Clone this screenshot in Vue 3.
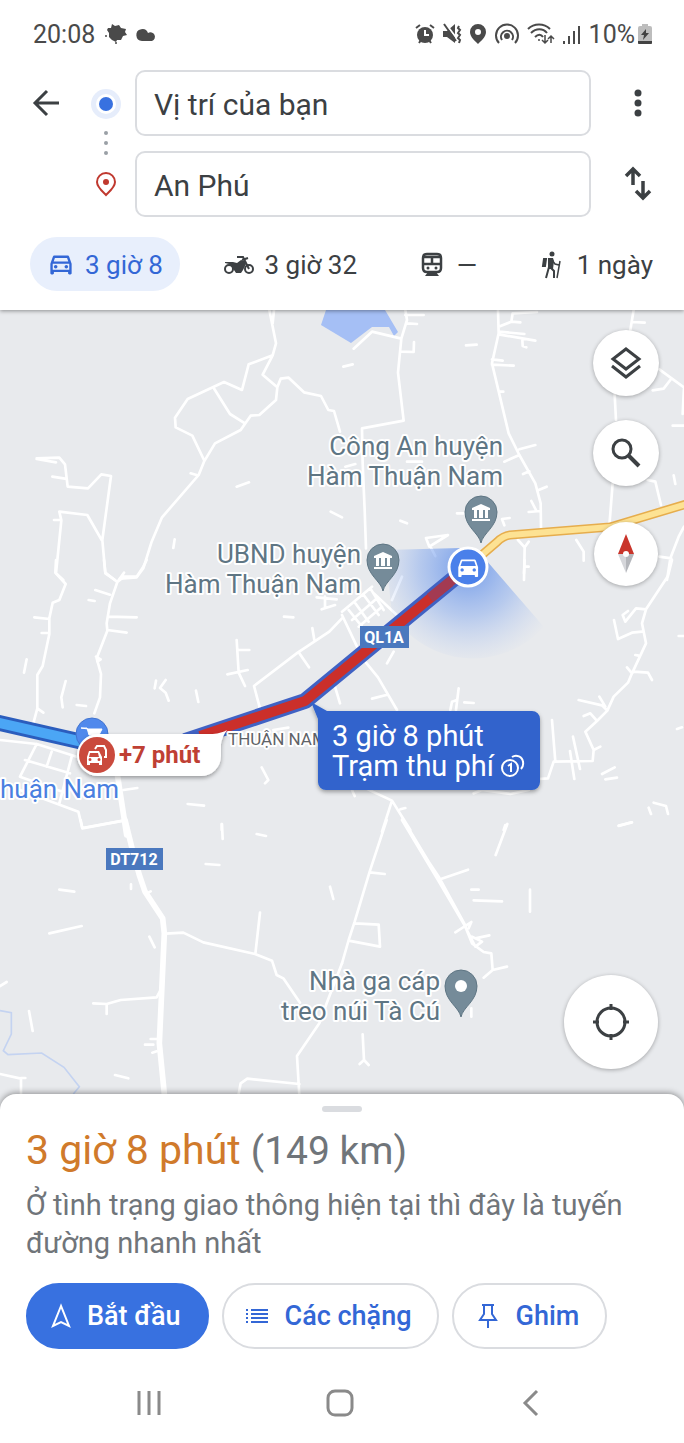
<template>
  <main class="app">
    <header class="header">
      <div class="status">
        <div class="status-side">
          <span>20:08</span>
          <svg width="24" height="24" viewBox="0 0 24 24" fill="currentColor">
            <path d="M5 6l3 0 1-4 3 2 4-1 2 3 5 1-1 3 2 3-4 1-2 4-4 0-1 2-4-2-3-3 0-4-2-3z" />
            <circle cx="3" cy="14" r="1" />
            <circle cx="13" cy="21" r="1" />
          </svg>
          <svg width="22" height="24" viewBox="0 0 22 24" fill="currentColor">
            <path d="M7 19a6 6 0 1 1 6-8A4.500 4.500 0 1 1 17 19z" />
          </svg>
        </div>
        <div class="status-side status-right">
          <svg width="20" height="22" viewBox="0 0 20 22" fill="none" stroke="currentColor" stroke-width="2">
            <circle cx="10" cy="12" r="8" fill="currentColor" stroke="none" />
            <path d="M1 5l4-3M19 5l-4-3M4 20l2-3M16 20l-2-3" />
            <path d="M10 7v5h4" stroke="#fff" />
          </svg>
          <svg width="20" height="22" viewBox="0 0 20 22" fill="none" stroke="currentColor" stroke-width="2">
            <path d="M1 8h4l8-7v19l-8-6H1z" fill="currentColor" stroke="none" />
            <path d="M3 0l13 17" stroke="#fff" />
            <path d="M2 1l12 17M17 3l-1 2 2 2-2 3 2 2-2 3 2 2-1 3" />
          </svg>
          <svg width="18" height="22" viewBox="0 0 18 22" fill="currentColor">
            <path fill-rule="evenodd" d="M9 1a8 8 0 0 1 8 8c0 5-5 9-8 12-3-3-8-7-8-12a8 8 0 0 1 8-8zm0 5a3 3 0 1 0 0 6 3 3 0 0 0 0-6z" />
          </svg>
          <svg width="26" height="22" viewBox="0 0 26 22" fill="none" stroke="currentColor" stroke-width="2">
            <circle cx="13" cy="13" r="2" fill="currentColor" />
            <path d="M8 17a6 6 0 1 1 10 0M5 20a11 11 0 1 1 16 0" />
          </svg>
          <svg width="28" height="22" viewBox="0 0 28 22" fill="none" stroke="currentColor" stroke-width="2">
            <path d="M1 6c6-6 16-6 22 0M4 10c5-5 12-5 16 0M8 14c3-3 6-3 8 0" />
            <circle cx="12" cy="17" r="1" fill="currentColor" stroke="none" />
            <path d="M18 12v8m-3-3l3 3 3-3M24 20v-7m-3 3l3-3 3 3" stroke-width="1.500" />
          </svg>
          <svg width="20" height="22" viewBox="0 0 20 22" fill="none" stroke="currentColor" stroke-width="2">
            <path d="M2 21v-3M7 21v-8M12 21V8M17 21V3" />
          </svg>
          <span>10%</span>
          <svg class="battery" width="14" height="22" viewBox="0 0 14 22">
            <path d="M4 1h6v2h2a2 2 0 0 1 2 2v15a1 1 0 0 1-1 1H1a1 1 0 0 1-1-1V5a2 2 0 0 1 2-2h2z" fill="#bdbdbd" />
            <path d="M0 18h14v2a1 1 0 0 1-1 1H1a1 1 0 0 1-1-1zM8 6l-5 6h3l-1 5 6-7H8z" fill="#424242" />
          </svg>
        </div>
      </div>

      <div class="search">
        <button class="icon-btn back" aria-label="Quay lại">
          <svg width="32" height="32" viewBox="0 0 32 32" fill="none" stroke="currentColor" stroke-width="3">
            <path d="M29 16H5M17 4L5 16l12 12" />
          </svg>
        </button>
        <svg class="trail" width="44" height="147" viewBox="0 0 44 147">
          <circle cx="22" cy="34" r="15" fill="#e6edfb" />
          <circle cx="22" cy="34" r="10" fill="#fff" />
          <circle cx="22" cy="34" r="7" fill="#3871e0" />
          <g fill="#9aa0a6">
            <circle cx="22" cy="63" r="2" />
            <circle cx="22" cy="73" r="2" />
            <circle cx="22" cy="83" r="2" />
          </g>
          <path d="M22 125c-4-4-9-8-9-13a9 9 0 0 1 18 0c0 5-5 9-9 13z" fill="none" stroke="#c0392f" stroke-width="2" />
          <circle cx="22" cy="112" r="3" fill="#c0392f" />
        </svg>
        <input class="place" v-model="origin" type="text" aria-label="Điểm đi" />
        <button class="icon-btn" aria-label="Tùy chọn khác">
          <svg width="32" height="32" viewBox="0 0 32 32" fill="currentColor">
            <circle cx="16" cy="6" r="3.500" />
            <circle cx="16" cy="16" r="3.500" />
            <circle cx="16" cy="26" r="3.500" />
          </svg>
        </button>
        <input class="place" v-model="destination" type="text" aria-label="Điểm đến" />
        <button class="icon-btn" aria-label="Đảo chiều" @click="swap">
          <svg width="32" height="36" viewBox="0 0 32 36" fill="none" stroke="currentColor" stroke-width="3.500">
            <path d="M11 19V3M4 10l7-7 7 7M21 15v17M14 25l7 7 7-7" />
          </svg>
        </button>
      </div>

      <nav class="modes" aria-label="Phương tiện">
        <button
          v-for="mode in modes"
          :key="mode.id"
          class="mode"
          :class="{ active: mode.id === selectedMode }"
          :aria-label="mode.name + ' ' + mode.time"
          @click="selectedMode = mode.id"
        >
          <svg v-if="mode.id === 'car'" width="26" height="26" viewBox="1 2 22 22" fill="currentColor">
            <path :d="carOutline" />
            <circle cx="7.500" cy="14.500" r="1.500" />
            <circle cx="16.500" cy="14.500" r="1.500" />
          </svg>
          <svg v-else-if="mode.id === 'bike'" width="30" height="26" viewBox="0 0 30 26" fill="none" stroke="currentColor" stroke-width="2">
            <circle cx="5" cy="17" r="4" />
            <circle cx="25" cy="17" r="4" />
            <path d="M1 10l8 0 4 1 4-3 4 1 1 3-3 6-2 3h-5l-4-6-3-3-4-1z" fill="currentColor" stroke="none" />
            <path d="M13 5h6l6 12M18 8l6-2" />
          </svg>
          <svg v-else-if="mode.id === 'train'" width="28" height="26" viewBox="-4 0 28 26" fill="none" stroke="currentColor" stroke-width="2.500">
            <path d="M5 2h10c3 0 4 1 4 4v10c0 3-2 4-4 4H5c-2 0-4-1-4-4V6c0-3 1-4 4-4zM1 5h18M1 12h18M10 5v7" />
            <path d="M6 20l-3 4h14l-3-4z" fill="currentColor" stroke="none" />
            <circle cx="6" cy="16" r="1.500" fill="currentColor" stroke="none" />
            <circle cx="14" cy="16" r="1.500" fill="currentColor" stroke="none" />
          </svg>
          <svg v-else width="28" height="28" viewBox="-4 0 28 28" fill="none" stroke="currentColor" stroke-width="2">
            <circle cx="10" cy="3" r="2.500" fill="currentColor" stroke="none" />
            <path d="M6 7h5l1 3-1 8H6z" fill="currentColor" stroke="none" />
            <path d="M2 8h2l-1 7H1zM7 16l-3 11M9 17l3 3v7" />
            <path d="M10 9l3 4 4 1M18 10l-3 17" stroke-width="1.500" />
          </svg>
          <span>{{ mode.time }}</span>
        </button>
      </nav>
    </header>

    <section class="map" aria-label="Bản đồ">
      <svg class="canvas" viewBox="0 310 684 800" preserveAspectRatio="xMidYMid slice">
        <defs>
          <radialGradient id="beam" gradientUnits="userSpaceOnUse" cx="468" cy="567" r="98">
            <stop offset="0" stop-color="#4a80e8" stop-opacity="0.750" />
            <stop offset="0.500" stop-color="#7aa2ee" stop-opacity="0.450" />
            <stop offset="1" stop-color="#a9c2f2" stop-opacity="0" />
          </radialGradient>
          <filter id="drop" x="-20%" y="-20%" width="140%" height="150%">
            <feDropShadow dx="0" dy="2" stdDeviation="2" flood-opacity="0.350" />
          </filter>
        </defs>

        <path class="lake" d="M326 310L321 325 351 343 372 327 389 327 394 336 398 332 385 310z" />

        <g v-for="tile in tiles" :key="tile.x + '-' + tile.y" :transform="`translate(${tile.x} ${tile.y}) scale(0.33333)`">
          <path class="river" v-if="tile.river" :d="tile.river" />
          <path class="road" :d="tile.roads" />
          <path class="road wide" v-if="tile.wide" :d="tile.wide" />
        </g>

        <path d="M468 567L486 560 544 627A96 96 0 0 1 392 614L385 550 460 548z" fill="url(#beam)" />

        <path class="line" d="M476 560L497 542Q503 536 510 535L610 527 690 503" stroke="#e6ad4d" stroke-width="9" />
        <path class="line" d="M476 560L497 542Q503 536 510 535L610 527 690 503" stroke="#fde293" stroke-width="6" />

        <path class="line" d="M-5 722L96 745" stroke="#2b5dbd" stroke-width="16" />
        <path class="line" d="M-5 722L96 745" stroke="#4ba6f5" stroke-width="10" />
        <path class="line" d="M185 741L305 701 468 567" stroke="#4062c4" stroke-width="16" />
        <path class="line" d="M200 736L305 701 450 582" stroke="#cb2f2a" stroke-width="10" />
        <path class="line" d="M430 598L462 572" stroke="#a33a52" stroke-width="10" />

        <!-- points of interest -->
        <g v-for="poi in pois" :key="poi.x">
          <g :transform="`translate(${poi.x} ${poi.y})`">
            <path d="M0 31C-2 21-16 15-16 0a16 16 0 0 1 32 0C16 15 2 21 0 31z" fill="#758b99" stroke="#5f7684" />
            <path v-if="poi.building" d="M-9-4L0-8 9-4v2H-9zM-7-2h3v8h-3zM-2-2h4v8h-4zM4-2h3v8H4zM-9 7H9v2H-9z" fill="#fff" />
            <circle v-else r="6" fill="#fff" />
          </g>
          <text class="label" :x="poi.tx" :y="poi.ty" text-anchor="end">{{ poi.lines[0] }}</text>
          <text class="label" :x="poi.tx" :y="poi.ty + 30" text-anchor="end">{{ poi.lines[1] }}</text>
        </g>
        <text class="label shop" x="0" y="798">huận Nam</text>
        <text class="label town" x="228" y="745">THUẬN NAM</text>

        <g class="shield">
          <rect x="360" y="626" width="49" height="22" />
          <text x="384" y="643">QL1A</text>
          <rect x="106" y="848" width="57" height="22" />
          <text x="134" y="865">DT712</text>
        </g>

        <circle cx="92" cy="734" r="16" fill="#5089ec" stroke="#4274cf" />
        <path d="M81 728h6l2 7h10l3-6H88z" fill="#fff" stroke="#fff" />

        <g filter="url(#drop)">
          <path d="M98 734H213Q222 733 227 730Q222 737 221 744V756A20 20 0 0 1 201 776H98A21 21 0 0 1 98 734z" fill="#fff" />
        </g>
        <circle cx="97" cy="755" r="18" fill="#ca4a3d" />
        <g transform="translate(86 746)">
          <path d="M9 3L11 0h7l2 4v7h-2" fill="none" stroke="#fff" stroke-width="2" />
          <path fill-rule="evenodd" d="M3 5h10l3 6v8h-3v-2H4v2H1v-8zM4 7l-1 4h10l-1-4zM4 12a1.500 1.500 0 1 0 0 3 1.500 1.500 0 0 0 0-3zM13 12a1.500 1.500 0 1 0 0 3 1.500 1.500 0 0 0 0-3z" fill="#fff" />
        </g>
        <text class="delay" x="119" y="763">+7 phút</text>

        <circle cx="468" cy="567" r="19" fill="#4a80ea" stroke="#fff" stroke-width="3" />
        <path :d="carSolid" fill="#fff" transform="translate(455 554) scale(1.100)" />

        <g filter="url(#drop)">
          <path d="M311 702L327 711H532a8 8 0 0 1 8 8v63a8 8 0 0 1-8 8H326a8 8 0 0 1-8-8V719z" fill="#3064cc" />
        </g>
        <text class="callout" x="332" y="746">3 giờ 8 phút</text>
        <text class="callout" x="332" y="776">Trạm thu phí</text>
        <g fill="none" stroke="#fff" stroke-width="2">
          <circle cx="510" cy="768" r="8" />
          <path d="M512 757A7 7 0 0 1 523 762A8 8 0 0 1 521 769M508 766l3-2v8" />
        </g>
      </svg>

      <div class="controls">
        <button class="fab" aria-label="Lớp bản đồ">
          <svg width="36" height="36" viewBox="0 0 36 36" fill="none" stroke="currentColor" stroke-width="3">
            <path d="M18 4L31 14 18 24 5 14zM4 21l14 11 14-11" />
          </svg>
        </button>
        <button class="fab" aria-label="Tìm kiếm">
          <svg width="36" height="36" viewBox="0 0 36 36" fill="none" stroke="currentColor" stroke-width="3">
            <circle cx="14" cy="14" r="9" />
            <path d="M21 21l10 10" stroke-width="4" />
          </svg>
        </button>
        <button class="fab compass" aria-label="La bàn">
          <svg width="20" height="40" viewBox="0 0 20 40">
            <path d="M10 0l8 20H2z" fill="#c9352b" />
            <path d="M2 20h8v19z" fill="#d5d6da" />
            <path d="M18 20h-8v19z" fill="#b4b6bb" />
            <circle cx="10" cy="20" r="3" fill="#fff" />
          </svg>
        </button>
      </div>
      <button class="fab locate" aria-label="Vị trí của tôi">
        <svg width="38" height="38" viewBox="0 0 38 38" fill="none" stroke="currentColor" stroke-width="3">
          <circle cx="19" cy="19" r="14" />
          <path d="M19 1v6M19 31v6M1 19h6M31 19h6" />
        </svg>
      </button>
    </section>

    <section class="sheet">
      <div class="handle"></div>
      <h1 class="summary">3 giờ 8 phút <span>(149 km)</span></h1>
      <p class="note">Ở tình trạng giao thông hiện tại thì đây là tuyến đường nhanh nhất</p>
      <div class="actions">
        <button class="action primary">
          <svg width="22" height="26" viewBox="1 0 22 26" fill="none" stroke="currentColor" stroke-width="2">
            <path d="M12 3L4 23l8-4 8 4z" />
          </svg>
          Bắt đầu
        </button>
        <button class="action">
          <svg width="24" height="26" viewBox="0 0 24 26" fill="none" stroke="currentColor" stroke-width="2">
            <path d="M0 7h2M0 11h2M0 15h2M0 19h2M5 7h17M5 11h17M5 15h17M5 19h17" />
          </svg>
          Các chặng
        </button>
        <button class="action">
          <svg width="24" height="26" viewBox="-2 0 24 26" fill="none" stroke="currentColor" stroke-width="2">
            <path d="M4 2h12M6 2v9l-4 6h16l-4-6V2M10 17v8" />
          </svg>
          Ghim
        </button>
      </div>
    </section>

    <nav class="system-nav" aria-label="Điều hướng">
      <button aria-label="Gần đây">
        <svg width="28" height="28" viewBox="0 0 28 28" fill="none" stroke="currentColor" stroke-width="3">
          <path d="M4 2v24M14 2v24M24 2v24" />
        </svg>
      </button>
      <button aria-label="Trang chủ">
        <svg width="28" height="28" viewBox="0 0 28 28" fill="none" stroke="currentColor" stroke-width="3">
          <rect x="2" y="2" width="24" height="24" rx="7" />
        </svg>
      </button>
      <button aria-label="Trở lại">
        <svg width="28" height="28" viewBox="0 0 28 28" fill="none" stroke="currentColor" stroke-width="3">
          <path d="M20 2L8 14l12 12" />
        </svg>
      </button>
    </nav>
  </main>
</template>

<script setup>
import { ref } from 'vue'

const origin = ref('Vị trí của bạn')
const destination = ref('An Phú')
const selectedMode = ref('car')

const swap = () => {
  const previous = origin.value
  origin.value = destination.value
  destination.value = previous
}

const modes = [
  { id: 'car', name: 'Ô tô', time: '3 giờ 8' },
  { id: 'bike', name: 'Xe máy', time: '3 giờ 32' },
  { id: 'train', name: 'Tàu', time: '—' },
  { id: 'walk', name: 'Đi bộ', time: '1 ngày' },
]

const carBody =
  'M18.92 6.01C18.72 5.42 18.16 5 17.5 5h-11c-.66 0-1.21.42-1.42 1.01L3 12v8c0 .55.45 1 1 1h1c.55 0 1-.45 1-1v-1h12v1c0 .55.45 1 1 1h1c.55 0 1-.45 1-1v-8l-2.08-5.99z'
const carOutline = carBody + 'M6.85 7h10.29l1.04 3H5.81l1.04-3zM19 17H5v-5h14v5z'
const carSolid =
  carBody +
  'M6.5 16c-.83 0-1.5-.67-1.5-1.5S5.67 13 6.5 13s1.5.67 1.5 1.5S7.33 16 6.5 16zm11 0c-.83 0-1.5-.67-1.5-1.5s.67-1.5 1.5-1.5 1.5.67 1.5 1.5-.67 1.5-1.5 1.5zM5 11l1.5-4.5h11L19 11H5z'

const pois = [
  { x: 481, y: 512, tx: 503, ty: 455, building: true, lines: ['Công An huyện', 'Hàm Thuận Nam'] },
  { x: 383, y: 560, tx: 361, ty: 563, building: true, lines: ['UBND huyện', 'Hàm Thuận Nam'] },
  { x: 461, y: 986, tx: 440, ty: 990, building: false, lines: ['Nhà ga cáp', 'treo núi Tà Cú'] },
]

// road geometry, three units per map pixel inside each tile
const tiles = [
  {
    x: 0,
    y: 310,
    roads:
      'M808 0L828 100 818 136 788 194 832 232 828 270 778 315 752 317 722 360 645 400 612 455 596 495 486 622 455 695 430 775 410 802 360 806' +
      'M822 0L818 40M832 232L842 206 866 203 912 247 963 258 985 300 1002 303 1020 365' +
      'M818 136L746 163 726 240 672 216 563 267 525 323 527 352 577 377 612 450M643 237L690 312 735 340M572 490L592 496' +
      'M110 445L178 443 195 463 203 530 264 535 304 493 333 498 307 690 316 790 345 810M110 447L168 457M157 500L195 506' +
      'M162 630H184M190 810L168 790 184 631 178 605 262 615 305 690M710 530L747 517M992 605L1026 622M524 688L520 714',
  },
  {
    x: 342,
    y: 310,
    roads:
      'M35 116L90 65 178 86M190 0L195 30 178 86 168 188 185 332 60 355 62 460 68 600 72 715M190 15H245M195 40L225 42M178 125L215 126 216 96' +
      'M372 106L404 104M4 170L32 163M468 0L470 70 450 160 500 370 532 435 580 520 596 580 597 655' +
      'M470 50L508 35 512 10 585 6M508 35L535 37M470 65L547 72M470 73L580 92M541 88L542 108 553 112M450 148L482 152M450 164L515 167M470 245H484' +
      'M532 418L580 405M532 435L487 455M543 492L562 484M590 540L614 530M560 606L595 603M568 573L582 600M503 624L480 627 487 646' +
      'M875 0L865 60M870 36L908 38M818 255L822 330M812 520L803 635M917 510L940 515 957 585M952 178L1026 232 1022 312M985 210L965 236 932 241' +
      'M992 347H1026M995 496L1000 522M1026 650L1010 680 985 745 975 810M952 740L988 745M703 690L725 725 725 752M528 690L548 712 546 810M548 712L560 695' +
      'M345 610H365M175 632L195 640M252 684L318 675 262 710zM268 715L280 738M10 470L40 462M195 455H240',
  },
  {
    x: 0,
    y: 560,
    roads:
      'M168 0L166 38 197 72 178 120 158 128 148 175 148 222 128 318 112 345 112 445 100 490' +
      'M312 0L316 38 352 66 330 130 320 190 322 212 290 295 303 342 300 412 283 460M372 38L352 66 372 50 410 50 430 20 440 0' +
      'M286 90L330 104M266 120L284 123M103 172L148 177M125 219H148M325 170L410 172M322 210L380 218M80 298L72 338M197 363L184 412 188 442' +
      'M112 445L130 458M230 435L258 438M288 290L302 298 292 305M468 362L464 385M497 360L480 384 497 398 506 422M588 392L595 426' +
      'M710 240L716 338 735 378M716 270H748M682 343L743 330M852 170L880 172M937 204L943 240M1026 175L988 215 893 278 762 378 780 445M897 278L927 322M1005 380L1020 430' +
      'M950 112L1010 118M965 148L1005 135M975 110V140M0 540L110 552 230 590M110 552L60 650M75 600L210 640M155 575L140 620M60 650L200 700M215 590L178 730' +
      'M60 690L235 755 247 805 370 782M370 690L412 684M785 622L805 660 795 670M563 732L612 737M665 792V810M820 510L865 503',
    wide: 'M350 630L380 825',
  },
  {
    x: 342,
    y: 560,
    roads:
      'M546 40L548 0M548 20H560M990 0L978 48 912 148 900 190 912 250 870 340 858 368 815 410 796 452 765 483 730 515 755 570 752 603 635 605 618 655 590 657' +
      'M912 148L882 145 850 185 842 165 858 153M900 215L870 218 828 237 816 180M880 285L890 287M855 322L870 340 875 335 918 338 930 360' +
      'M1010 228H1026M710 420L780 436 796 452M772 410L790 440M725 468L745 460 765 483M755 570L775 560M630 480L640 605M693 530L714 627M684 573L697 657' +
      'M780 642L818 622M790 658L825 653M1005 507L1020 502M920 743L927 762M935 728L972 738 978 762M830 798L868 787' +
      'M350 385L342 450M325 450L330 425 345 420M367 427L395 429M72 308L108 352 165 450M90 416L133 405M395 700L420 690 505 702 560 690' +
      'M60 680L150 722 205 810M150 722L120 815M175 748L190 744M30 690L38 708M490 795L485 810' +
      'M0 155L90 80M0 165L45 260M20 150L60 200M40 130L80 185M65 105L110 165M85 85L125 150M30 180L105 115M50 200L120 140M95 100L170 170M150 120L180 50M135 310L155 275',
  },
  {
    x: 0,
    y: 820,
    river: 'M0 572L34 578V642L10 692 24 704 125 699 192 742 238 800 220 822',
    roads:
      'M242 0L247 24 370 2M666 12L668 57M770 42L798 48M617 132L658 135M178 209L223 215M393 193V207M440 220L452 214M148 340L245 318M448 350L464 382' +
      'M497 341L550 338 610 367 765 402 816 422 830 465 850 475 900 548M780 278L766 402M990 200L1000 237M280 550L320 552 320 582M320 552L362 540 470 532 482 510' +
      'M0 498L20 486M87 573L98 633M452 657H472M435 674H460M457 698L470 694M345 765L385 775M0 762L63 776V860M63 774H76' +
      'M716 860V822L722 790 742 776 898 792M1026 430L980 550 958 610 891 708 900 860',
    wide: 'M375 0L400 100 418 165 435 215 488 295 493 340 478 670 493 822V870',
  },
  {
    x: 342,
    y: 820,
    roads:
      'M134 0L83 155 38 305 20 360 0 430M180 0L288 180 370 320M182 -4L260 125 290 170 372 320M370 320L390 370 425 396 448 400 452 450 425 473M452 450L495 440' +
      'M83 157L128 162M288 180L378 149M496 12L461 105M388 209H410M395 241L480 244M564 209V275M38 310L110 314 114 380 20 362M340 337L388 306 380 325' +
      'M372 325L400 380 420 365 390 350M400 355L442 346M62 643L66 720 53 732M66 720L80 735M388 565V590M830 17L870 7',
  },
]
</script>

<style>
body {
  margin: 0;
}
</style>

<style scoped>
.app {
  display: flex;
  flex-direction: column;
  min-height: 100vh;
  font-family: Roboto, 'Noto Sans', sans-serif;
  color: #3c4043;
  background: #fff;
}

button {
  padding: 0;
  border: none;
  background: none;
  color: inherit;
  font: inherit;
  cursor: pointer;
}

svg {
  display: block;
  flex-shrink: 0;
}

.header {
  position: relative;
  z-index: 1;
  background: #fff;
  box-shadow: 0 1px 4px rgba(0, 0, 0, 0.4);
}

.status {
  display: flex;
  justify-content: space-between;
  align-items: center;
  height: 68px;
  padding: 0 32px 0 33px;
  font-size: 25px;
  color: #4a4a4a;
}

.status-side {
  display: flex;
  align-items: center;
  gap: 8px;
}

.status-right {
  gap: 7px;
}

.battery {
  margin-left: -4px;
}

.search {
  display: grid;
  grid-template-columns: 54px 44px 1fr 93px;
  grid-template-rows: 66px 66px;
  row-gap: 15px;
  align-items: center;
  padding: 2px 0 0 30px;
}

.trail {
  grid-row: 1 / 3;
  grid-column: 2;
}

.place {
  grid-column: 3;
  box-sizing: border-box;
  min-width: 0;
  width: auto;
  height: 66px;
  margin-left: 7px;
  padding: 2px 17px 0;
  border: 2px solid #dadce0;
  border-radius: 10px;
  font: inherit;
  font-size: 30px;
  color: inherit;
  background: #fff;
}

.icon-btn {
  display: flex;
  justify-content: center;
}

.back {
  justify-content: flex-start;
}

.modes {
  display: flex;
  justify-content: space-between;
  padding: 20px 14px 19px 30px;
}

.mode {
  display: flex;
  align-items: center;
  gap: 11px;
  height: 54px;
  padding: 2px 17px 0 18px;
  box-sizing: border-box;
  border-radius: 27px;
  font-size: 26px;
}

.mode.active {
  color: #3367d6;
  background: #e8effc;
}

.map {
  position: relative;
  flex: 1;
  min-height: 600px;
  overflow: hidden;
  background: #e8eaed;
}

.canvas {
  position: absolute;
  inset: 0;
  width: 100%;
  height: 100%;
}

.lake {
  fill: #a5bff5;
}

.road {
  fill: none;
  stroke: #fff;
  stroke-width: 8;
  stroke-linejoin: round;
  stroke-linecap: round;
}

.road.wide {
  stroke-width: 17;
}

.river {
  fill: none;
  stroke: #c4d3f1;
  stroke-width: 5;
}

.line {
  fill: none;
  stroke-linejoin: round;
}

.label {
  font-size: 26px;
  fill: #5f7684;
  stroke: #fff;
  stroke-width: 4px;
  stroke-linejoin: round;
  paint-order: stroke;
}

.label.shop {
  fill: #4a7fe0;
}

.label.town {
  font-size: 17px;
  fill: #5f6368;
}

.shield rect {
  fill: #4a78be;
}

.shield text {
  font-size: 16px;
  font-weight: 700;
  fill: #fff;
  text-anchor: middle;
}

.delay {
  font-size: 24px;
  font-weight: 700;
  fill: #bf4034;
}

.callout {
  font-size: 29px;
  fill: #fff;
}

.controls {
  position: absolute;
  top: 20px;
  right: 25px;
  display: flex;
  flex-direction: column;
  align-items: center;
  gap: 24px;
}

.fab {
  display: flex;
  align-items: center;
  justify-content: center;
  width: 66px;
  height: 66px;
  border-radius: 50%;
  background: #fff;
  box-shadow: 0 1px 4px rgba(0, 0, 0, 0.3);
}

.compass {
  width: 64px;
  height: 64px;
  margin-top: 12px;
}

.locate {
  position: absolute;
  right: 26px;
  bottom: 41px;
  width: 94px;
  height: 94px;
}

.sheet {
  position: relative;
  margin-top: -16px;
  padding: 12px 26px 13px;
  border-radius: 16px 16px 0 0;
  background: #fff;
  box-shadow: 0 -1px 6px rgba(0, 0, 0, 0.4);
}

.handle {
  width: 40px;
  height: 6px;
  margin: 0 auto;
  border-radius: 3px;
  background: #dadce0;
}

.summary {
  margin: 14px 0 11px;
  font-size: 41px;
  font-weight: 400;
  line-height: 48px;
  color: #d07a2b;
}

.summary span {
  font-size: 39px;
  color: #70757a;
}

.note {
  margin: 0 0 21px;
  font-size: 29px;
  line-height: 38px;
  color: #70757a;
}

.actions {
  display: flex;
  gap: 13px;
}

.action {
  display: flex;
  align-items: center;
  gap: 15px;
  height: 66px;
  padding: 0 26px 0 22px;
  border: 2px solid #dadce0;
  border-radius: 33px;
  font-size: 27px;
  font-weight: 500;
  color: #3367d6;
}

.action.primary {
  border-color: #3871e0;
  color: #fff;
  background: #3871e0;
}

.system-nav {
  position: relative;
  display: grid;
  grid-template-columns: repeat(3, 1fr);
  height: 81px;
  padding: 0 57px 0 53px;
  color: #8a8a8a;
  background: #fff;
}

.system-nav button {
  display: flex;
  align-items: center;
  justify-content: center;
}
</style>
